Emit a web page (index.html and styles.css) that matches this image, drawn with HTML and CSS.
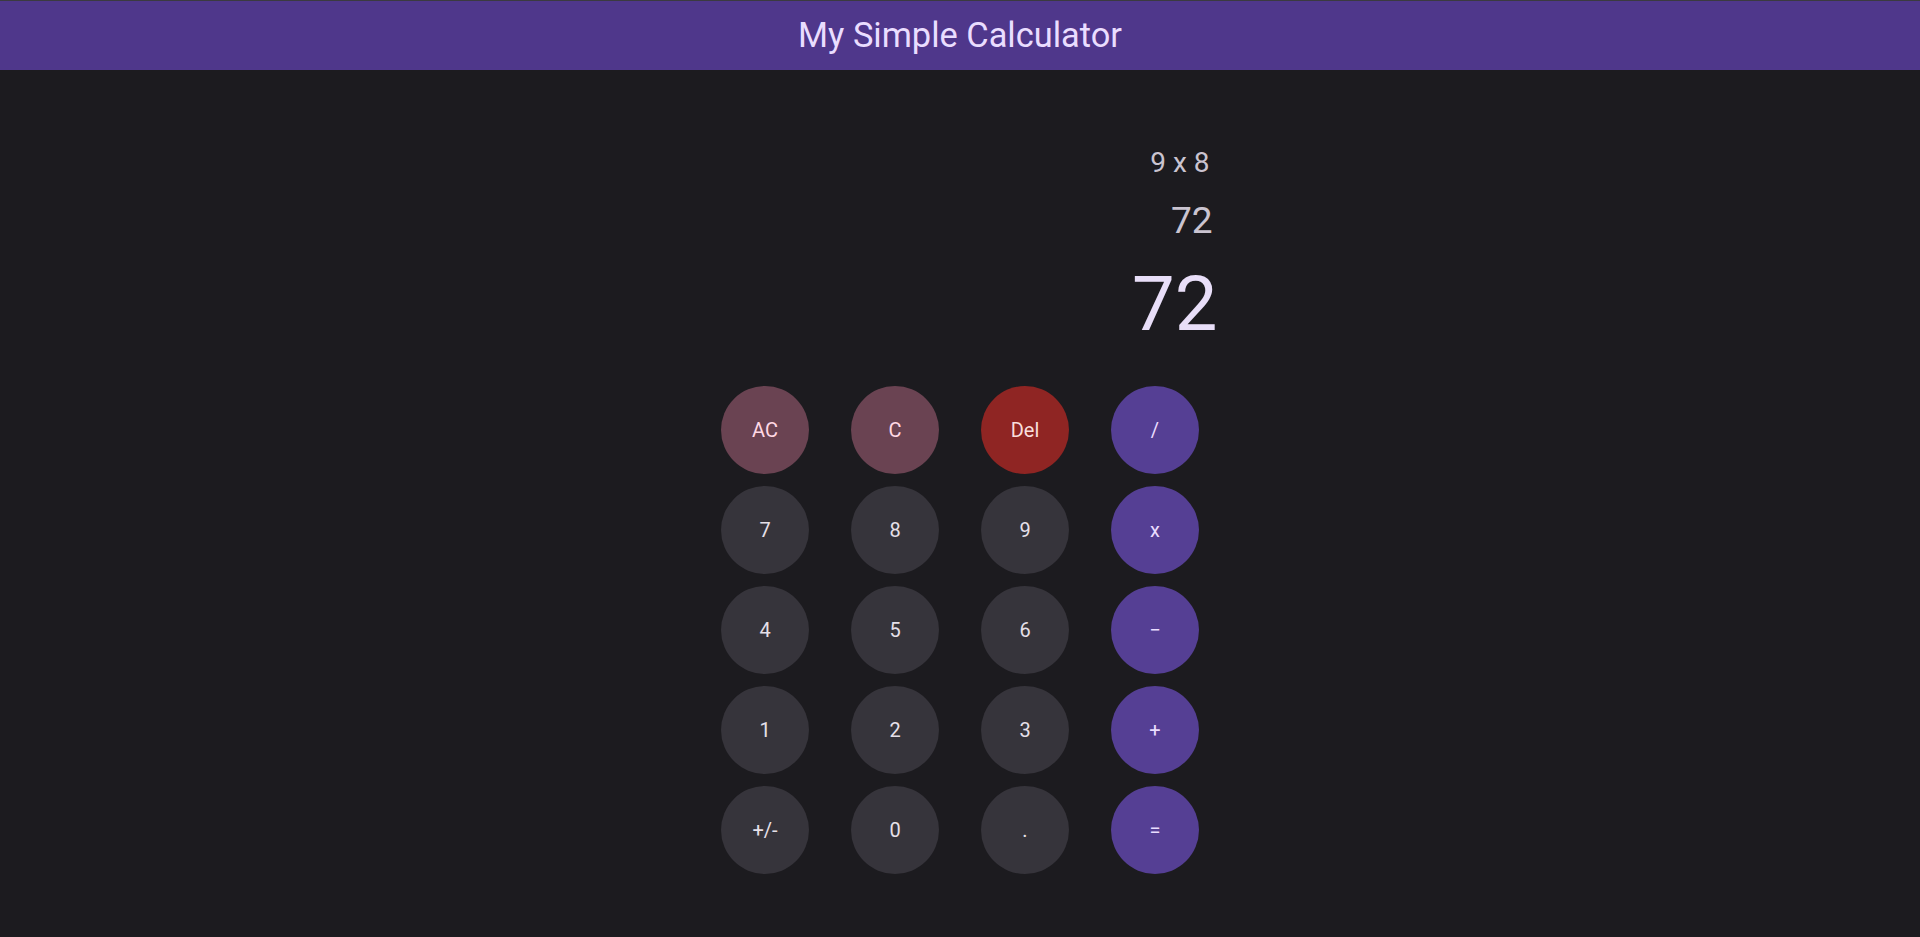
FILE: index.html
```html
<!DOCTYPE html>
<html lang="en">
<head>
<meta charset="utf-8">
<title>My Simple Calculator</title>
<link rel="stylesheet" href="styles.css">
</head>
<body>
<header class="app-bar">
  <h1 class="app-title">My Simple Calculator</h1>
</header>
<main class="calc">
  <section class="display">
    <div class="expr">9 x 8</div>
    <div class="preview">72</div>
    <div class="result">72</div>
  </section>
  <section class="keypad">
    <button class="key key-clear">AC</button>
    <button class="key key-clear">C</button>
    <button class="key key-del">Del</button>
    <button class="key key-op">/</button>
    <button class="key">7</button>
    <button class="key">8</button>
    <button class="key">9</button>
    <button class="key key-op">x</button>
    <button class="key">4</button>
    <button class="key">5</button>
    <button class="key">6</button>
    <button class="key key-op">&minus;</button>
    <button class="key">1</button>
    <button class="key">2</button>
    <button class="key">3</button>
    <button class="key key-op">+</button>
    <button class="key">+/-</button>
    <button class="key">0</button>
    <button class="key">.</button>
    <button class="key key-op">=</button>
  </section>
</main>
</body>
</html>
```
FILE: styles.css
```css
* { box-sizing: border-box; }
html, body {
  margin: 0;
  padding: 0;
  background: #1c1b1f;
  font-family: Roboto, "Liberation Sans", sans-serif;
  height: 100%;
}
.app-bar {
  border-top: 1px solid #3b3a40;
  height: 70px;
  background: #4f378b;
  display: flex;
  align-items: center;
  justify-content: center;
}
.app-title {
  margin: 0;
  font-weight: 400;
  font-size: 34.4px;
  line-height: 1;
  color: #eaddff;
}
.calc {
  display: flex;
  flex-direction: column;
  align-items: center;
  padding-top: 79px;
}
.display {
  width: 515px;
  display: flex;
  flex-direction: column;
  align-items: flex-end;
  color: #cac4d0;
}
.expr {
  font-size: 28px;
  line-height: 28px;
  padding-right: 8px;
}
.preview {
  margin-top: 25px;
  font-size: 37px;
  line-height: 37px;
  padding-right: 5px;
}
.result {
  margin-top: 27px;
  font-size: 76px;
  line-height: 76px;
  color: #e8def8;
}
.keypad {
  margin-top: 44px;
  display: grid;
  grid-template-columns: repeat(4, 88px);
  grid-auto-rows: 88px;
  column-gap: 42px;
  row-gap: 12px;
}
.key {
  width: 88px;
  height: 88px;
  border: none;
  border-radius: 50%;
  background: #36343b;
  color: #e6e0e9;
  font-family: Roboto, "Liberation Sans", sans-serif;
  font-size: 20px;
  padding: 0;
  display: flex;
  align-items: center;
  justify-content: center;
}
.key-clear {
  background: #6a4352;
  color: #ffd8e4;
}
.key-del {
  background: #8f2523;
  color: #f9dedc;
}
.key-op {
  background: #553f94;
  color: #eaddff;
}
```
